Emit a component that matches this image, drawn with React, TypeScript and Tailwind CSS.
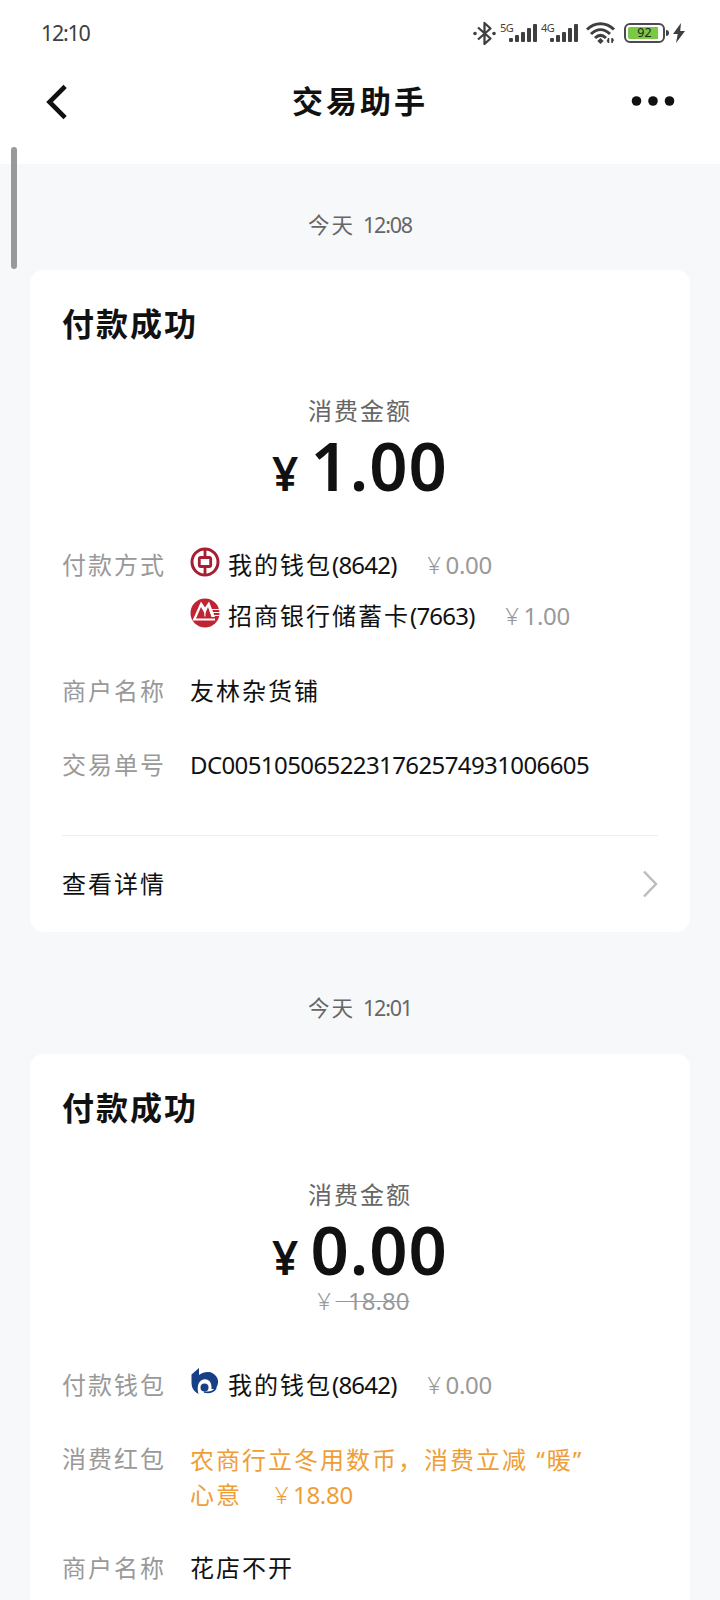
import type { ReactNode } from "react";

function Cjk({ children }: { children: ReactNode }) {
  return <span className="tracking-[2px]">{children}</span>;
}

function SignalBars() {
  return (
    <svg width="29" height="18" viewBox="0 0 29 18" fill="#3f3f3f">
      <rect x="0" y="14" width="4" height="4" rx="1.2" />
      <rect x="6" y="11" width="4" height="7" rx="1" />
      <rect x="12" y="8" width="4" height="10" rx="1" />
      <rect x="18" y="4" width="4" height="14" rx="1" />
      <rect x="24" y="0" width="4" height="18" rx="1" />
    </svg>
  );
}

function Signal({ label }: { label: string }) {
  return (
    <div className="relative w-[37px] pl-2">
      <span className="absolute -left-px -top-[2px] text-[11px] leading-[12px] tracking-[-0.5px]">{label}</span>
      <SignalBars />
    </div>
  );
}

function StatusBar() {
  return (
    <div className="flex h-[66px] items-center justify-between pl-[41px] pr-[35px] text-[#3f3f3f]">
      <span className="text-[21.5px] tracking-[-1.3px]">12:10</span>
      <div className="flex items-center">
        <svg className="mr-[5px]" width="23" height="25" viewBox="0 0 23 25" fill="none" stroke="#3f3f3f" strokeWidth="2.3">
          <path d="M5 6.5 17.5 17.5 11.5 23V2L17.5 7.5 5 18.5" strokeLinejoin="round" />
          <circle cx="2" cy="12.5" r="1.8" fill="#3f3f3f" stroke="none" />
          <circle cx="21" cy="12.5" r="1.8" fill="#3f3f3f" stroke="none" />
        </svg>
        <Signal label="5G" />
        <div className="w-[4px]" />
        <Signal label="4G" />
        <svg className="ml-[7px]" width="30" height="22" viewBox="0 0 30 22" fill="none" stroke="#3f3f3f" strokeWidth="3">
          <path d="M1 7.5C9 -.3 20 -.3 28 7.5" />
          <path d="M5 12C11 6.3 18 6.3 24 12" />
          <path d="M9 16C12.5 12.7 16.5 12.7 20 16" />
          <path d="m14.5 16 3.2 3-3.2 3-3.2-3Z" fill="#3f3f3f" stroke="none" />
          <path d="M22.5 16v5M26 16v5" strokeWidth="1.5" />
          <path d="m20.5 19 2-3v5ZM28.2 18 26 21v-5Z" fill="#3f3f3f" stroke="none" />
        </svg>
        <div className="ml-[8px] flex h-[20px] w-[41px] items-center rounded-[6px] border-2 border-[#4a4a50] p-[2px]">
          <div className="flex h-full w-[30px] items-center justify-center rounded-l-[2px] bg-[#7ac943] pl-[3px] text-[12.5px] leading-none text-[#222]">
            92
          </div>
        </div>
        <div className="ml-px h-[6px] w-[3px] rounded-r-sm bg-[#3f3f3f]" />
        <svg className="ml-[4px]" width="12" height="20" viewBox="0 0 12 20" fill="#3f3f3f">
          <path d="M8 0 0 11h4.7L3 20l9-12H7.2Z" />
        </svg>
      </div>
    </div>
  );
}

function NavBar() {
  return (
    <div className="flex h-[98px] items-start justify-between pl-[45px] pr-[45px] pt-[13px] text-[#111]">
      <svg className="mt-[5px]" width="24" height="36" viewBox="0 0 24 36" fill="none" stroke="#111" strokeWidth="4.6" strokeLinecap="square">
        <path d="M18.5 4 4.5 18l14 14" />
      </svg>
      <h1 className="ml-[20px] text-[31px] font-bold leading-[44px] tracking-[3px]">交易助手</h1>
      <svg className="mt-[16px]" width="44" height="12" viewBox="0 0 44 12" fill="#111">
        <circle cx="5.5" cy="6" r="4.8" />
        <circle cx="22" cy="6" r="4.8" />
        <circle cx="38.5" cy="6" r="4.8" />
      </svg>
    </div>
  );
}

function BankOfChinaIcon() {
  return (
    <svg width="30" height="30" viewBox="0 0 30 30" fill="none" stroke="#a71e32">
      <circle cx="15" cy="15" r="13" strokeWidth="3" />
      <rect x="9.3" y="10.5" width="11.4" height="9" rx="1.5" strokeWidth="2.8" />
      <path d="M15 2v8M15 20v8" strokeWidth="2.8" />
    </svg>
  );
}

function MerchantsBankIcon() {
  return (
    <svg width="30" height="30" viewBox="0 0 30 30">
      <circle cx="15" cy="15" r="14.5" fill="#bf2433" />
      <path d="M2.5 22.5 11 3.5l4 6 4-6 6 15.5h-3.5L18 9l-3 7-4-7-5 11.5h19v2Z" fill="#fff" />
      <path d="M14.9 9.5v9M22 11.5h8M23 14.5h7M24.3 17.5H30" stroke="#fff" strokeWidth="1.1" />
    </svg>
  );
}

function CcbIcon() {
  return (
    <svg width="30" height="30" viewBox="0 0 30 30">
      <path d="M1.5 7.5 9 1v7c4-3 10-4 14-1.500 6 3.500 6.500 10 2.500 15.500h-4c.5-7-3-10.500-8-9.500-5 1-7 7-5 14.500C3 24 1.500 20 1.500 15Z" fill="#173f86" />
      <circle cx="14.500" cy="20.500" r="4" fill="#173f86" />
      <path d="M14 25c5 1 9.500 0 12-4" fill="none" stroke="#173f86" strokeWidth="1.600" />
    </svg>
  );
}

function Yuan() {
  return <span className="inline-block w-[25px] pl-[2px] text-center font-light">¥</span>;
}

type WalletProps = { icon: ReactNode; name: string; tail: string; amount: string };

function Wallet({ icon, name, tail, amount }: WalletProps) {
  return (
    <div className="flex h-[30px] items-center">
      <span className="-mt-[6px] mr-[8px]">{icon}</span>
      <Cjk>{name}</Cjk>
      <span className="tracking-[-0.8px]">({tail})</span>
      <span className="ml-[24px] tracking-[-0.3px] text-[#999]">
        <Yuan />
        {amount}
      </span>
    </div>
  );
}

function Row({ label, children }: { label: string; children: ReactNode }) {
  return (
    <div className="flex">
      <div className="w-[128px] shrink-0 text-[#999]">
        <Cjk>{label}</Cjk>
      </div>
      <div className="min-w-0 flex-1">{children}</div>
    </div>
  );
}

function TimeLabel({ time }: { time: string }) {
  return (
    <div className="flex h-[30px] items-center justify-center text-[21.5px] text-[#666]">
      <Cjk>今天</Cjk>
      <span className="ml-[8px] tracking-[-1.2px]">{time}</span>
    </div>
  );
}

type CardProps = { amount: string; origin?: string; children: ReactNode };

function PaymentCard({ amount, origin, children }: CardProps) {
  return (
    <section className="mx-[30px] rounded-[14px] bg-white px-[32px] pt-[34px] text-[24px] leading-[30px] text-[#111]">
      <h2 className="text-[32px] font-bold leading-[40px] tracking-[2px]">付款成功</h2>
      <div className="mt-[52px] text-center text-[#666]">
        <Cjk>消费金额</Cjk>
      </div>
      <div className="mt-[9px] flex h-[60px] items-baseline justify-center font-semibold leading-[60px]">
        <span className="text-[46px] leading-[60px]">¥</span>
        <span className="ml-[12px] text-[67px] tracking-[1px]">{amount}</span>
      </div>
      {origin && (
        <div className="mt-[7px] flex h-[30px] justify-center text-[#999]">
          <span className="line-through decoration-1">
            <Yuan />
            &nbsp;&nbsp;{origin}
          </span>
        </div>
      )}
      {children}
    </section>
  );
}

export default function App() {
  return (
    <div className="relative h-[1600px] w-[720px] overflow-hidden bg-[#f6f8fa] font-['Noto_Sans','Noto_Sans_CJK_SC',sans-serif]">
      <header className="bg-white">
        <StatusBar />
        <NavBar />
      </header>

      {/* scroll indicator */}
      <div className="absolute left-[11px] top-[147px] h-[122px] w-[6px] rounded-full bg-[#999]" />

      <main className="pt-[46px]">
        <TimeLabel time="12:08" />
        <div className="h-[30px]" />
        <PaymentCard amount="1.00">
          <div className="mt-[55px]">
            <Row label="付款方式">
              <div className="flex flex-col gap-[21px]">
                <Wallet icon={<BankOfChinaIcon />} name="我的钱包" tail="8642" amount="0.00" />
                <Wallet icon={<MerchantsBankIcon />} name="招商银行储蓄卡" tail="7663" amount="1.00" />
              </div>
            </Row>
          </div>
          <div className="mt-[45px] flex flex-col gap-[44px]">
            <Row label="商户名称">
              <Cjk>友林杂货铺</Cjk>
            </Row>
            <Row label="交易单号">
              <span className="tracking-[-0.6px]">DC0051050652231762574931006605</span>
            </Row>
          </div>
          <div className="mt-[55px] flex h-[97px] items-center justify-between border-t border-[#eee]">
            <Cjk>查看详情</Cjk>
            <svg width="16" height="28" viewBox="0 0 16 28" fill="none" stroke="#bbb" strokeWidth="2.4">
              <path d="m2 1.500 12 12.500-12 12.500" />
            </svg>
          </div>
        </PaymentCard>

        <div className="h-[61px]" />
        <TimeLabel time="12:01" />
        <div className="h-[31px]" />
        <PaymentCard amount="0.00" origin="18.80">
          <div className="mt-[54px]">
            <Row label="付款钱包">
              <Wallet icon={<CcbIcon />} name="我的钱包" tail="8642" amount="0.00" />
            </Row>
          </div>
          <div className="mt-[44px]">
            <Row label="消费红包">
              <div className="-mt-[2px] leading-[35px] text-[#ef9e37]">
                <Cjk>农商行立冬用数币，消费立减 “暖”</Cjk>
                <br />
                <Cjk>心意</Cjk>
                <span className="ml-[26px] tracking-[-0.3px]">
                  <Yuan />
                  18.80
                </span>
              </div>
            </Row>
          </div>
          <div className="mt-[41px]">
            <Row label="商户名称">
              <Cjk>花店不开</Cjk>
            </Row>
          </div>
          <div className="h-[200px]" />
        </PaymentCard>
      </main>
    </div>
  );
}
